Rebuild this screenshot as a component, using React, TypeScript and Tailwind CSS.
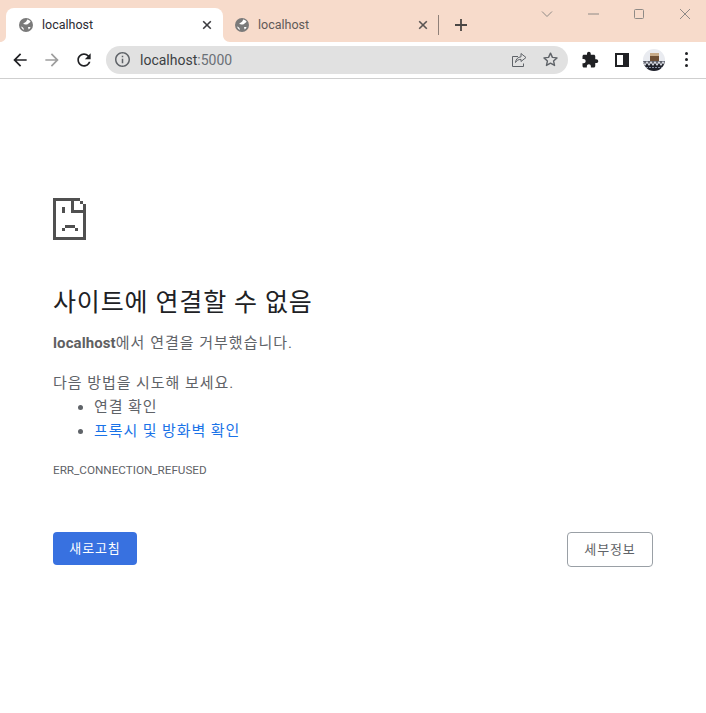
const FONT = "font-['Roboto','Noto_Sans_CJK_KR',sans-serif]";

function Globe() {
  return (
    <svg viewBox="0 0 14 14" className="w-[14px] h-[14px] shrink-0">
      <circle cx="7" cy="7" r="7" fill="#7a7a7a" />
      <path d="M8.2 1.6c1.3.3 2.6 1 3.4 2.1-.6.9-1.5 1-2 1.8-.7 1-1.8 1.3-3 1-.8-.2-1.5-.2-2.4-.6.6-1.2 1.9-1.3 2.8-2.1.5-.5.9-1.2 1.2-2.2z" fill="#ffffff" />
      <path d="M2 8.6c.9.2 1.8.6 2.4 1.3.4.5.5 1.3.4 2.2-1.3-.7-2.3-2-2.8-3.5zM9 9.1c.8-.3 1.7-.3 2.6.1-.4.9-1.1 1.7-2 2.3-.2-.9-.4-1.6-.6-2.4z" fill="#ffffff" />
    </svg>
  );
}

function TabClose({ color }: { color: string }) {
  return (
    <svg viewBox="0 0 10 10" className="w-[10px] h-[10px] shrink-0" stroke={color} strokeWidth="1.6" fill="none">
      <path d="M1.2 1.2l7.6 7.6M8.8 1.2l-7.6 7.6" />
    </svg>
  );
}

function TabStrip() {
  return (
    <div className="relative h-[42px] bg-[#f7dbcb] flex items-end pl-[6px]">
      <div className="relative w-[217px] h-[34px] bg-white rounded-t-[8px] flex items-center pl-[13px] pr-[11px]">
        <svg viewBox="0 0 6 6" className="absolute left-[-6px] bottom-0 w-[6px] h-[6px]" fill="#ffffff">
          <path d="M6 0v6H0c3.5 0 6-2.5 6-6z" />
        </svg>
        <svg viewBox="0 0 7 7" className="absolute right-[-7px] bottom-0 w-[7px] h-[7px]" fill="#ffffff">
          <path d="M0 0v7h7C3 7 0 4 0 0z" />
        </svg>
        <Globe />
        <span className="ml-[9px] flex-1 text-[12.5px] text-[#2b2b33]">localhost</span>
        <TabClose color="#3c3c40" />
      </div>
      <div className="w-[215px] h-[34px] flex items-center pl-[12px] pr-[10px]">
        <Globe />
        <span className="ml-[9px] flex-1 text-[12.5px] text-[#5f5a58]">localhost</span>
        <TabClose color="#5a5553" />
      </div>
      <div className="w-px h-[20px] mb-[7px] bg-[#8f8078]" />
      <div className="w-[44px] h-[34px] flex items-center justify-center">
        <svg viewBox="0 0 14 14" className="w-[14px] h-[14px]" stroke="#4a4644" strokeWidth="1.8" fill="none">
          <path d="M7 1v12M1 7h12" />
        </svg>
      </div>
      <div className="absolute right-[-2px] top-0 flex items-center h-[28px]">
        <WinButton>
          <path d="M1 3.5l5 5 5-5" />
        </WinButton>
        <WinButton>
          <path d="M1 6h11" />
        </WinButton>
        <WinButton>
          <rect x="1.5" y="1.5" width="9" height="9" rx="1" />
        </WinButton>
        <WinButton>
          <path d="M1 1l10 10M11 1L1 11" />
        </WinButton>
      </div>
    </div>
  );
}

function WinButton({ children }: { children: React.ReactNode }) {
  return (
    <div className="w-[46px] flex justify-center">
      <svg viewBox="0 0 12 12" className="w-[12px] h-[12px]" stroke="#8f8a86" strokeWidth="1" fill="none">
        {children}
      </svg>
    </div>
  );
}

function NavIcon({ d, color }: { d: string; color: string }) {
  return (
    <div className="w-[32px] flex justify-center">
      <svg viewBox="0 0 24 24" className="w-[20px] h-[20px]" fill={color}>
        <path d={d} />
      </svg>
    </div>
  );
}

function Toolbar() {
  return (
    <div className="h-[37px] bg-white border-b border-[#cfcfcf] flex items-center pl-[4px] pb-[1px]">
      <NavIcon color="#202124" d="M20 11H7.83l5.59-5.59L12 4l-8 8 8 8 1.41-1.41L7.83 13H20v-2z" />
      <NavIcon color="#9e9e9e" d="M12 4l-1.41 1.41L16.17 11H4v2h12.17l-5.58 5.59L12 20l8-8z" />
      <NavIcon color="#202124" d="M17.65 6.35C16.2 4.9 14.21 4 12 4c-4.42 0-7.99 3.58-7.99 8s3.57 8 7.99 8c3.73 0 6.84-2.55 7.73-6h-2.08c-.82 2.33-3.04 4-5.65 4-3.31 0-6-2.69-6-6s2.69-6 6-6c1.66 0 3.14.69 4.22 1.78L13 11h7V4l-2.35 2.35z" />
      <div className="ml-[6px] w-[462px] h-[28px] rounded-full bg-[#e1e1e1] flex items-center pl-[9px] pr-[9px]">
        <svg viewBox="2 2 20 20" className="w-[15px] h-[15px] shrink-0" fill="#5f6368">
          <path d="M11 7h2v2h-2zm0 4h2v6h-2zm1-9C6.48 2 2 6.48 2 12s4.48 10 10 10 10-4.48 10-10S17.52 2 12 2zm0 18c-4.41 0-8-3.59-8-8s3.59-8 8-8 8 3.59 8 8-3.59 8-8 8z" />
        </svg>
        <span className="ml-[10px] flex-1 text-[14px] text-[#3c4043] pt-[1px]">
          localhost<span className="text-[#6b7076]">:5000</span>
        </span>
        <svg viewBox="0 0 16 16" className="w-[16px] h-[16px] mr-[15px]" stroke="#5f6368" strokeWidth="1" fill="none">
          <path d="M7 4.5H1.5v10h11V11.5" />
          <path d="M10 1.5l5 4-5 4V7.4C7.5 7.4 5.7 8.3 4.5 10.5c.3-3.4 2.4-5.4 5.5-5.7z" />
        </svg>
        <svg viewBox="0 0 24 24" className="w-[17px] h-[17px]" stroke="#5f6368" strokeWidth="2" strokeLinejoin="round" fill="none">
          <path d="M12 3l2.7 6 6.5.7-4.9 4.3 1.4 6.4L12 17.1l-5.7 3.3 1.4-6.4-4.9-4.3 6.5-.7z" />
        </svg>
      </div>
      <div className="ml-[12px] w-[20px] flex justify-center">
        <svg viewBox="0 0 24 24" className="w-[18px] h-[18px]" fill="#202124">
          <path d="M20.5 11H19V7c0-1.1-.9-2-2-2h-4V3.5C13 2.12 11.88 1 10.5 1S8 2.12 8 3.5V5H4c-1.1 0-1.99.9-1.99 2v3.8H3.5c1.49 0 2.7 1.21 2.7 2.7s-1.21 2.7-2.7 2.7H2V20c0 1.1.9 2 2 2h3.8v-1.5c0-1.49 1.21-2.7 2.7-2.7 1.49 0 2.7 1.21 2.7 2.7V22H17c1.1 0 2-.9 2-2v-4h1.5c1.38 0 2.5-1.12 2.5-2.5S21.88 11 20.5 11z" />
        </svg>
      </div>
      <div className="ml-[15px] w-[14px] h-[14px] border-2 border-[#202124] flex justify-end">
        <div className="w-[4px] h-full bg-[#202124]" />
      </div>
      <svg viewBox="0 0 22 22" className="ml-[14px] w-[22px] h-[22px] shrink-0">
        <clipPath id="avatar">
          <circle cx="11" cy="11" r="11" />
        </clipPath>
        <g clipPath="url(#avatar)">
          <rect width="22" height="22" fill="#e9ebf0" />
          <rect x="7" y="4" width="9" height="3" fill="#c7ab8a" />
          <rect x="7" y="7" width="9" height="5" fill="#6e4f35" />
          <rect x="0" y="12" width="22" height="1.5" fill="#5c5f6a" />
          <rect x="0" y="13.5" width="22" height="9" fill="#20222b" />
          <path d="M0 13l2 3 2-3 2 3 2-3 2 3 2-3 2 3 2-3 2 3 2-3 2 3" stroke="#dde0e8" strokeWidth="1.2" fill="none" />
          <path d="M3 18.5h16" stroke="#8890a2" strokeWidth="1" strokeDasharray="2 1" />
        </g>
      </svg>
      <div className="ml-[20px] flex flex-col gap-[3px]">
        <div className="w-[3px] h-[3px] rounded-full bg-[#202124]" />
        <div className="w-[3px] h-[3px] rounded-full bg-[#202124]" />
        <div className="w-[3px] h-[3px] rounded-full bg-[#202124]" />
      </div>
    </div>
  );
}

function SadPage() {
  return (
    <svg viewBox="0 0 34 42" className="w-[34px] h-[42px]" fill="#505050" shapeRendering="crispEdges">
      <path d="M0 0h27v3H3v36h27V12h3v30H0z" />
      <path d="M18 3h3v9h9v3H18z" />
      <path d="M27 3h3v3h-3zM30 6h3v6h-3z" />
      <path d="M9 9h3v6H9z" />
      <path d="M12 27h10v3H12zM9 30h3v3H9zM22 30h3v3h-3z" />
    </svg>
  );
}

export default function App() {
  return (
    <div className={`w-[706px] h-[713px] bg-white overflow-hidden ${FONT}`}>
      <TabStrip />
      <Toolbar />
      <main className="px-[53px] pt-[119px]">
        <SadPage />
        <h1 className="mt-[45px] text-[25px] tracking-[0.85px] leading-[36px] text-[#202124]">사이트에 연결할 수 없음</h1>
        <p className="mt-[10px] text-[15px] tracking-[1px] leading-[24px] text-[#5f6368]">
          <b className="font-bold tracking-[0.1px] text-[#5f5f62]">localhost</b>에서 연결을 거부했습니다.
        </p>
        <p className="mt-[16px] text-[15px] tracking-[0.95px] leading-[24px] text-[#5f6368]">다음 방법을 시도해 보세요.</p>
        <ul className="list-disc pl-[41px] text-[15px] tracking-[0.9px] leading-[24px] text-[#5f6368]">
          <li>연결 확인</li>
          <li>
            <span className="text-[#1a73e8]">프록시 및 방화벽 확인</span>
          </li>
        </ul>
        <div className="mt-[18px] text-[11.7px] leading-[18px] text-[#5f6368]">ERR_CONNECTION_REFUSED</div>
        <div className="mt-[53px] flex items-start justify-between">
          <button className="w-[84px] h-[33px] rounded-[4px] bg-[#3871e0] text-white text-[13px] tracking-[0.9px]">새로고침</button>
          <button className="w-[86px] h-[35px] rounded-[4px] border border-[#9aa0a6] bg-white text-[#5f6368] text-[13px] tracking-[0.9px]">
            세부정보
          </button>
        </div>
      </main>
    </div>
  );
}
